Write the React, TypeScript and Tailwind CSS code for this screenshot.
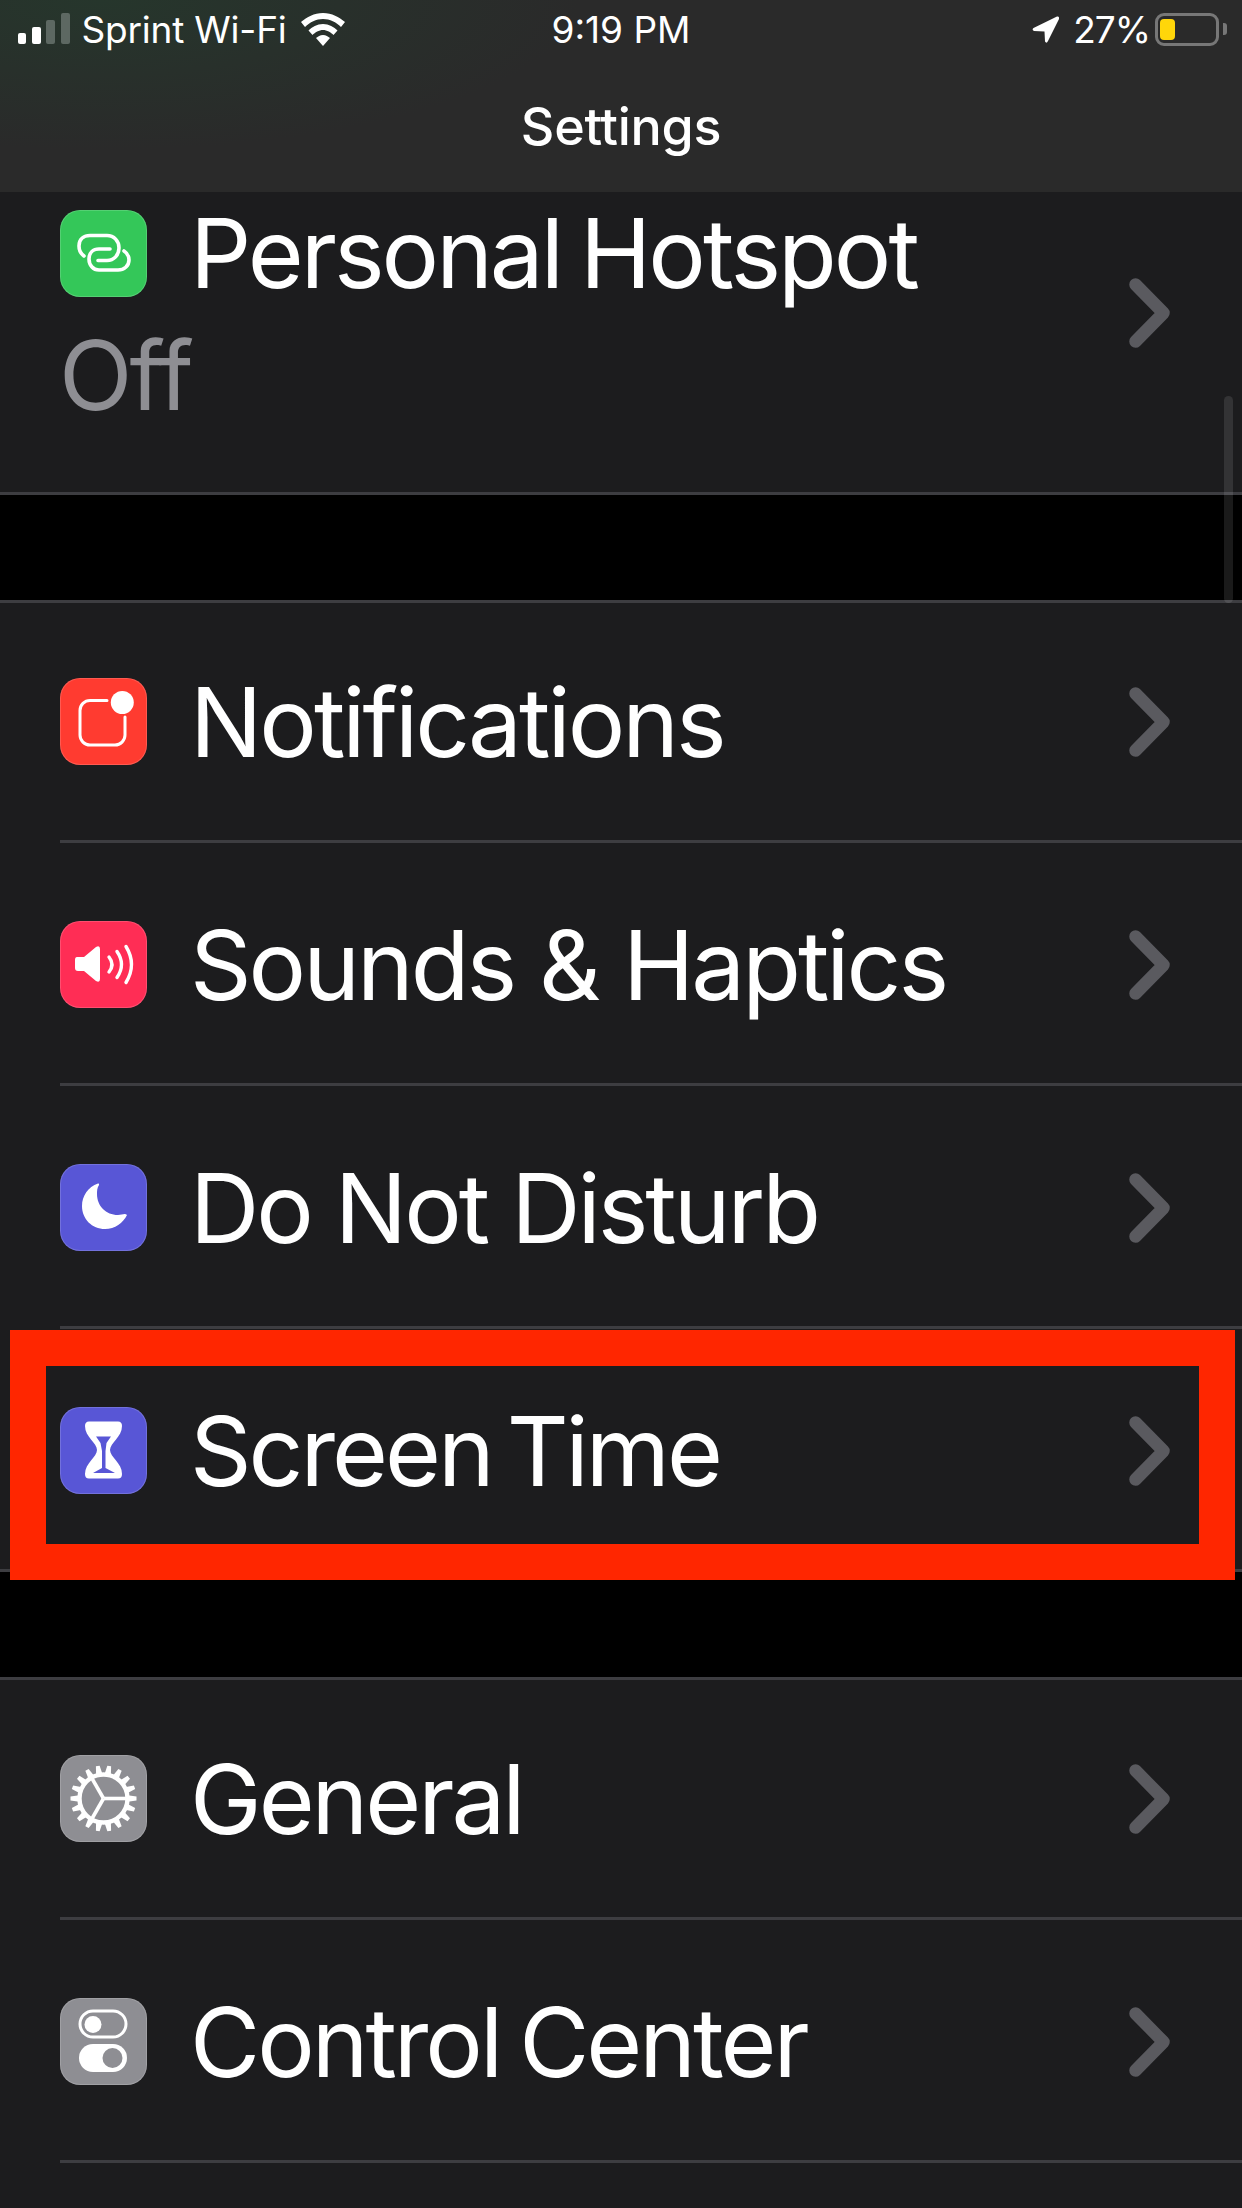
import React from "react";

const Chevron = ({ extra = "" }: { extra?: string }) => (
  <svg viewBox="0 0 41 70" className={`w-[41px] h-[70px] shrink-0 ml-auto mr-[72px] ${extra}`} fill="none" stroke="#5a5a5f" strokeWidth="12.5" strokeLinecap="round" strokeLinejoin="round">
    <path d="M6.5 6.5 L34.5 35 L6.5 63.5" />
  </svg>
);

const HotspotGlyph = () => (
  <g fill="none" stroke="#fff" strokeWidth="3.6" strokeLinecap="round">
    <path d="M24 46 C20 43 19 39 19 36 C19 29 24 25.5 30 25.5 H47 C54 25.5 59 31 59 38 C59 45 54 50.5 47 50.5 H38" />
    <path d="M50 39 H39 C33 39 29 43 29 49 C29 55 33 60 39 60 H58 C64 60 69 56 69 50 C69 46 67 43 64 41" />
  </g>
);

const NotificationsGlyph = () => (
  <g>
    <path d="M47 22.5 H30 a10 10 0 0 0 -10 10 V57 a10 10 0 0 0 10 10 H55 a10 10 0 0 0 10 -10 V39" fill="none" stroke="#fff" strokeWidth="3" strokeLinecap="round" />
    <circle cx="62.3" cy="24.5" r="11.5" fill="#fff" />
  </g>
);

const SoundsGlyph = () => (
  <g>
    <path d="M17 36 H24 L36 26 Q40 24 40 28 V58 Q40 62 36 60 L24 50 H18 Q15 50 15 47 V39 Q15 36 17 36 Z" fill="#fff" />
    <g fill="none" stroke="#fff" strokeWidth="3.4" strokeLinecap="round">
      <path d="M49 36 Q55 43.5 49 51" />
      <path d="M57 30.5 Q66 43.5 57 56.5" />
      <path d="M66 25.5 Q77 43.5 66 61.5" />
    </g>
  </g>
);

const MoonGlyph = () => (
  <path d="M38 19.5 C28 23 22 32 22 42 C22 55 32 65 45 65 C55 65 63 59 67 51 C65 49 62 51 58 51 C46 51 37 42 37 30 C37 27 37 24 39 21 Q39.5 19 38 19.5 Z" fill="#fff" />
);

const HourglassGlyph = () => (
  <g>
    <path d="M29 14.5 H58 Q62 14.5 62 19 C62 30 50 36 50 43 C50 50 62 56 62 67 Q62 71.5 58 71.5 H29 Q25 71.5 25 67 C25 56 37 50 37 43 C37 36 25 30 25 19 Q25 14.5 29 14.5 Z" fill="#fff" />
    <path d="M36 29.5 H51 L46.5 36 L45.5 44 V61 L55 66 H33 L42 61 V44 L40.5 36 Z" fill="#5856d6" />
  </g>
);

const GearGlyph = () => (
  <g>
    <circle cx="43.5" cy="43.5" r="24" strokeWidth="4.4" stroke="#fff" fill="none" />
    {Array.from({ length: 18 }, (_, i) => (
      <polygon key={i} points="41.6,10.5 45.4,10.5 47,21 40,21" fill="#fff" transform={`rotate(${i * 20 + 10} 43.5 43.5)`} />
    ))}
    <g strokeWidth="3.6" stroke="#fff">
      <line x1="43.5" y1="43.5" x2="68" y2="43.5" />
      <line x1="43.5" y1="43.5" x2="31.5" y2="22.5" />
      <line x1="43.5" y1="43.5" x2="31.5" y2="64.5" />
    </g>
  </g>
);

const ToggleGlyph = () => (
  <g>
    <rect x="20" y="13" width="46" height="26" rx="13" fill="none" stroke="#fff" strokeWidth="3" />
    <circle cx="33" cy="26.5" r="8.5" fill="#fff" />
    <rect x="19" y="46" width="48" height="28" rx="14" fill="#fff" />
    <circle cx="52.5" cy="60" r="10" fill="#8e8e93" />
  </g>
);

const AppIcon = ({ bg, children }: { bg: string; children: React.ReactNode }) => (
  <div className={`w-[87px] h-[87px] rounded-[20px] shrink-0 shadow-[inset_0_0_0_1px_rgba(255,255,255,0.16)] ${bg}`}>
    <svg viewBox="0 0 87 87" className="w-[87px] h-[87px] block">{children}</svg>
  </div>
);

const labelCls = "ml-[43px] text-white text-[96px] leading-none tracking-[-3px] whitespace-nowrap";

const Row = ({ label, bg, glyph, first, ws }: { label: string; bg: string; glyph: React.ReactNode; first?: boolean; ws: string }) => (
  <div className={`flex items-center pl-[60px] bg-[#1c1c1e] ${first ? "h-[237px]" : "h-[240px] pt-[3px]"}`}>
    <AppIcon bg={bg}>{glyph}</AppIcon>
    <span className={`${labelCls} ${ws}`}>{label}</span>
    <Chevron />
  </div>
);

const Inset = () => (
  <div className="bg-[#1c1c1e] pl-[60px]">
    <div className="h-[3px] bg-[#3d3d41]" />
  </div>
);
const Full = () => <div className="h-[3px] bg-[#3d3d41]" />;

export default function App() {
  return (
    <div className="relative w-[1242px] h-[2208px] overflow-hidden bg-black font-['Inter',sans-serif]">
      <header className="h-[192px] bg-[#2a2a2a] bg-[radial-gradient(ellipse_480px_150px_at_100px_0px,#26362c_0%,#2a2a2a_100%)] text-white flex flex-col">
        <div className="h-[58px] grid grid-cols-3 items-center text-[37px] leading-none">
          <div className="flex items-center pl-[18px]">
            <div className="flex items-end h-[31px] gap-[5.5px] mt-[-1px]">
              <span className="w-[8px] h-[11px] rounded-[2px] bg-white" />
              <span className="w-[9px] h-[17px] rounded-[2px] bg-white" />
              <span className="w-[9px] h-[24px] rounded-[2px] bg-[#5d6862]" />
              <span className="w-[9px] h-[31px] rounded-[2px] bg-[#5d6862]" />
            </div>
            <span className="ml-[12px] whitespace-nowrap tracking-[-0.2px]">Sprint Wi-Fi</span>
            <svg viewBox="0 0 44 33" className="w-[44px] h-[33px] ml-[14px] shrink-0" fill="#fff">
              <path d="M22 0 C13 0 6 4 0 9 L4 14 C9 9 15 6 22 6 C29 6 35 9 40 14 L44 9 C38 4 31 0 22 0 Z" />
              <path d="M22 11 C16 11 11 14 7.5 17.5 L11.5 22 C14 19.5 18 17 22 17 C26 17 30 19.5 32.5 22 L36.5 17.5 C33 14 28 11 22 11 Z" />
              <path d="M22 22 C19 22 17 23.5 15 25 L22 33 L29 25 C27 23.5 25 22 22 22 Z" />
            </svg>
          </div>
          <div className="text-center whitespace-nowrap">9:19 PM</div>
          <div className="flex items-center justify-end pr-[15px]">
            <svg viewBox="0 0 27 27" className="w-[27px] h-[27px] shrink-0" fill="#fff">
              <path d="M25 0.5 L1.5 12 Q-0.5 14 2 15 L12.5 15.5 L13 25.5 Q14.5 28 16 25 L27 3 Q27.5 0 25 0.5 Z" />
            </svg>
            <span className="ml-[14px] whitespace-nowrap tracking-[-1px]">27%</span>
            <div className="relative ml-[5px] w-[64px] h-[33px] rounded-[9px] border-[3px] border-[#777777] shrink-0">
              <div className="absolute left-[2px] top-[3px] w-[15px] h-[21px] rounded-[4px] bg-[#ffd60a]" />
            </div>
            <div className="ml-[4px] w-[4px] h-[12px] rounded-r-[3px] bg-[#777777]" />
          </div>
        </div>
        <div className="flex-1 flex items-start justify-center pt-[41px]">
          <h1 className="text-[52px] leading-[56px] font-medium tracking-[-0.3px]">Settings</h1>
        </div>
      </header>

      <section className="h-[300px] bg-[#1c1c1e] flex items-center">
        <div className="flex flex-col h-full pl-[60px] pt-[13px]">
          <div className="flex items-center">
            <AppIcon bg="bg-[#34c759]"><HotspotGlyph /></AppIcon>
            <span className={`${labelCls} [word-spacing:-5px]`}>Personal Hotspot</span>
          </div>
          <span className="text-[#8e8e93] text-[96px] leading-none tracking-[-3px] mt-[26px] ml-[-1px]">Off</span>
        </div>
        <Chevron extra="mb-[58px]" />
      </section>
      <Full />
      <div className="h-[105px]" />
      <Full />
      <Row first label="Notifications" ws="tracking-[-2.8px]" bg="bg-[#ff3b30]" glyph={<NotificationsGlyph />} />
      <Inset />
      <Row label="Sounds & Haptics" ws="[word-spacing:1px]" bg="bg-[#ff2d55]" glyph={<SoundsGlyph />} />
      <Inset />
      <Row label="Do Not Disturb" ws="[word-spacing:0px]" bg="bg-[#5856d6]" glyph={<MoonGlyph />} />
      <Inset />
      <Row label="Screen Time" ws="[word-spacing:-9px]" bg="bg-[#5856d6]" glyph={<HourglassGlyph />} />
      <Full />
      <div className="h-[105px]" />
      <Full />
      <Row first label="General" ws="[word-spacing:0px]" bg="bg-[#8e8e93]" glyph={<GearGlyph />} />
      <Inset />
      <Row label="Control Center" ws="[word-spacing:-5px]" bg="bg-[#8e8e93]" glyph={<ToggleGlyph />} />
      <Inset />
      <div className="h-[60px] bg-[#1c1c1e]" />

      <div className="absolute left-[1224px] top-[396px] w-[9px] h-[207px] rounded-full bg-white/10" />
      <div className="absolute left-[10px] top-[1330px] w-[1225px] h-[250px] border-[36px] border-[#ff2600] pointer-events-none" />
    </div>
  );
}
